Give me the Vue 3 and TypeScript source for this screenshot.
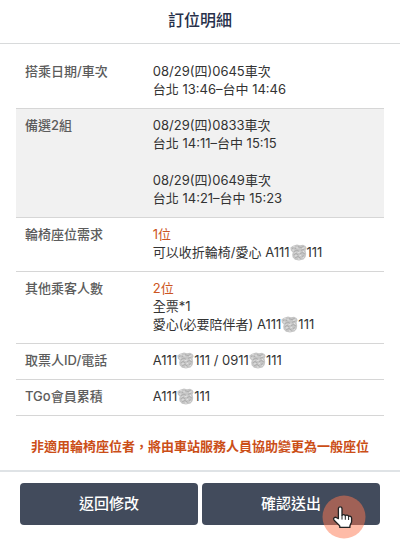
<script setup lang="ts">
import { h, type FunctionalComponent } from 'vue'

interface Line {
  text: string
  accent?: boolean
}

interface Row {
  label: string
  lines: Line[]
  shaded?: boolean
}

const rows: Row[] = [
  {
    label: '搭乘日期/車次',
    lines: [{ text: '08/29(四)0645車次' }, { text: '台北 13:46–台中 14:46' }],
  },
  {
    label: '備選2組',
    shaded: true,
    lines: [
      { text: '08/29(四)0833車次' },
      { text: '台北 14:11–台中 15:15' },
      { text: '' },
      { text: '08/29(四)0649車次' },
      { text: '台北 14:21–台中 15:23' },
    ],
  },
  {
    label: '輪椅座位需求',
    lines: [{ text: '1位', accent: true }, { text: '可以收折輪椅/愛心 A111#111' }],
  },
  {
    label: '其他乘客人數',
    lines: [
      { text: '2位', accent: true },
      { text: '全票*1' },
      { text: '愛心(必要陪伴者) A111#111' },
    ],
  },
  { label: '取票人ID/電話', lines: [{ text: 'A111#111 / 0911#111' }] },
  { label: 'TGo會員累積', lines: [{ text: 'A111#111' }] },
]

// Scribbled patch that hides the private digits, written as "#" in the data.
const Mask: FunctionalComponent = () =>
  h('svg', { class: 'mask', viewBox: '0 0 17 17', 'aria-hidden': 'true' }, [
    h('path', {
      d: 'M.4 3.5 3 1.8 7 .6 10 1.2 13 .8 15.5 2 16.6 4 15.6 6.5 16.2 10 15.6 13 13.5 15.4 9 16.4 5 15.8 2.6 13.2 2.2 10.5 2.8 8.5 .8 6.5Z',
      fill: '#c6c6c6',
    }),
    h('path', {
      d: 'M2 4.6 4 3.4 6 4.8M8 2.6 11 3.6 13.6 2.4M4 7.6 7 6 9 7.4M11 6.4 14.4 5M3.6 11 6 9.4 8.4 11M10 9.6 12.4 8.6 15 10M5 14 8 12.4 10.6 14.4M12 12.4 14 11.8',
      fill: 'none',
      stroke: '#a6a6a6',
      'stroke-width': '0.8',
    }),
    h('path', {
      d: 'M3 2.8 5 3M6.6 3 8 4.6M12 4.4 14.6 3.8M2.4 6 4.2 6.2M7.6 8.6 10.4 8M13 7 14.4 8.4M4.6 9 5.6 8.4M5 12 6.8 11.6M9.4 11.8 11.2 11.2M8 14.8 9.6 15.2M12.6 13.8 14 13',
      fill: 'none',
      stroke: '#e6e6e6',
      'stroke-width': '0.9',
    }),
  ])
</script>

<template>
  <main class="page">
    <header class="header">
      <h1>訂位明細</h1>
    </header>

    <section class="content">
      <table class="details">
        <tbody>
          <tr v-for="row in rows" :key="row.label" :class="{ shaded: row.shaded }">
            <th scope="row">{{ row.label }}</th>
            <td>
              <div
                v-for="(line, i) in row.lines"
                :key="i"
                class="line"
                :class="{ accent: line.accent }"
              >
                <template v-for="(part, j) in line.text.split('#')" :key="j"><Mask v-if="j > 0" />{{ part }}</template>
              </div>
            </td>
          </tr>
        </tbody>
      </table>
      <p class="notice">非適用輪椅座位者，將由車站服務人員協助變更為一般座位</p>
    </section>

    <footer class="actions">
      <button type="button">返回修改</button>
      <button type="button">
        確認送出
        <svg class="pointer" viewBox="0 0 44 44" aria-hidden="true">
          <circle cx="22" cy="22" r="21.5" fill="#fd7850" fill-opacity="0.5" />
          <path
            d="M16.4 23.6V13.8c0-2.6 3.6-2.6 3.6 0v6.6c.7-1.1 2.9-1 3.3.3.8-.9 2.9-.7 3.3.7 1.1-.7 3 0 3 1.6v3.4c0 1.8-1.7 3.2-1.7 5v1H17.8v-1.2c-1.3-2.2-3.9-3.4-5.7-6-1.5-2.2.9-3.6 2.6-2.5z"
            fill="#fff"
            stroke="#222"
            stroke-width="1.3"
            stroke-linejoin="round"
          />
          <path d="M20 20.8v3.4M23.3 21v3.4M26.6 21.6v3" fill="none" stroke="#222" stroke-linecap="round" />
        </svg>
      </button>
    </footer>
  </main>
</template>

<style>
body {
  background: #fff;
}
</style>

<style scoped>
.page {
  font-family: Inter, "Noto Sans CJK TC", sans-serif;
  font-size: 13px;
  line-height: 18px;
  color: #333;
}

.header {
  padding: 8px 16px 11px;
  border-bottom: 1px solid #d8dadb;
  text-align: center;
}

h1 {
  margin: 0;
  font-size: 16px;
  line-height: 24px;
  font-weight: 500;
  color: #27304a;
}

.content {
  padding: 11px 16px 15px;
}

.details {
  width: 100%;
  border-collapse: separate;
  border-spacing: 0;
}

th,
td {
  padding: 7px 0 10px 8px;
  border-bottom: 1px solid #d6d6d6;
  vertical-align: top;
  text-align: left;
  font-weight: 400;
}

th {
  width: 35%;
  padding-left: 9px;
  font-weight: 500;
  color: #5c5c5c;
}

.shaded {
  background: #f1f1f1;
}

.line {
  white-space: nowrap;
}

.line:empty {
  height: 19px;
}

.accent {
  color: #cc5522;
}

.mask {
  width: 17px;
  height: 17px;
  vertical-align: -4px;
}

.notice {
  margin: 21px 0 0;
  text-align: center;
  white-space: nowrap;
  font-weight: 700;
  color: #cb4e17;
}

.actions {
  display: flex;
  gap: 4px;
  padding: 11px 20px 17px;
  border-top: 2px solid #dfe3e6;
}

button {
  position: relative;
  flex: 1;
  height: 42px;
  padding: 0;
  border: 0;
  border-radius: 4px;
  background: #424b5c;
  color: #fff;
  font: 500 15px/24px Inter, "Noto Sans CJK TC", sans-serif;
}

.pointer {
  position: absolute;
  right: 14px;
  bottom: -14px;
  width: 44px;
  height: 44px;
}
</style>
